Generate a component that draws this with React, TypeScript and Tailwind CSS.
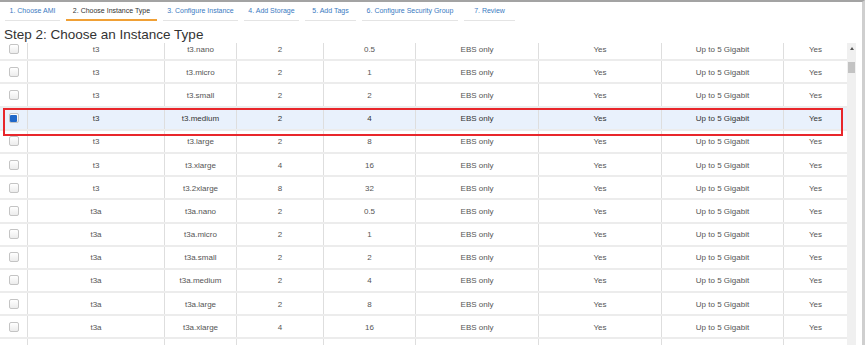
const tabs = [
  { label: '1. Choose AMI', w: 'w-[55px]' },
  { label: '2. Choose Instance Type', w: 'w-[91px]' },
  { label: '3. Configure Instance', w: 'w-[75px]' },
  { label: '4. Add Storage', w: 'w-[55px]' },
  { label: '5. Add Tags', w: 'w-[51px]' },
  { label: '6. Configure Security Group', w: 'w-[96px]' },
  { label: '7. Review', w: 'w-[51px]' },
];

const rows = [
  ['t3', 't3.nano', '2', '0.5'],
  ['t3', 't3.micro', '2', '1'],
  ['t3', 't3.small', '2', '2'],
  ['t3', 't3.medium', '2', '4'],
  ['t3', 't3.large', '2', '8'],
  ['t3', 't3.xlarge', '4', '16'],
  ['t3', 't3.2xlarge', '8', '32'],
  ['t3a', 't3a.nano', '2', '0.5'],
  ['t3a', 't3a.micro', '2', '1'],
  ['t3a', 't3a.small', '2', '2'],
  ['t3a', 't3a.medium', '2', '4'],
  ['t3a', 't3a.large', '2', '8'],
  ['t3a', 't3a.xlarge', '4', '16'],
];

const SELECTED = 3;
const grid = 'grid grid-cols-[27px_137px_72px_87px_92px_123px_123px_122px_64px]';
const cell = 'flex items-center justify-center border-l border-[#dedede] pt-[2px]';

function Checkbox({ checked }: { checked: boolean }) {
  return (
    <div className="w-[10px] h-[10px] rounded-[2px] border border-[#c4c4c4] bg-gradient-to-b from-white to-[#ececec] flex items-center justify-center">
      {checked && <div className="w-[7px] h-[7px] rounded-[1px] bg-[#1f67c9]" />}
    </div>
  );
}

export default function App() {
  return (
    <div
      className="w-[865px] h-[345px] overflow-hidden bg-white border-t-2 border-r-[3px] border-t-[#a3a3a3] border-r-[#cfcfcf] flex flex-col"
      style={{ fontFamily: '"Liberation Sans", Arial, sans-serif' }}
    >
      {/* wizard tabs */}
      <div className="flex gap-[6px] pl-[5px] h-[19px]">
        {tabs.map((t, i) => (
          <div
            key={t.label}
            className={
              t.w +
              (i === 1
                ? ' pt-[4px] text-center border-b-2 border-[#f0a035] text-[7px] leading-[10px] text-[#333]'
                : ' pt-[4px] text-center border-b border-[#e4e4e4] text-[7px] leading-[10px] text-[#3a7abf]')
            }
          >
            {t.label}
          </div>
        ))}
      </div>

      <h1 className="mt-[6px] pl-[4px] text-[13.5px] leading-[16px] text-[#333]">
        Step 2: Choose an Instance Type
      </h1>

      <div className="flex flex-1 min-h-0">
        {/* table, scrolled */}
        <div className="w-[847px] overflow-hidden relative">
          <div className="-mt-[5px]">
            {rows.map((r, i) => {
              const sel = i === SELECTED;
              return (
                <div
                  key={r[1]}
                  className={
                    (sel ? 'bg-[#e9f1fc] text-[#333] ' : 'text-[#555] ') +
                    grid +
                    ' h-[23.2px] border-b-2 border-[#ececec] text-[8px]'
                  }
                >
                  <div className="flex items-center justify-center">
                    <Checkbox checked={sel} />
                  </div>
                  <div className={cell}>{r[0]}</div>
                  <div className={cell}>{r[1]}</div>
                  <div className={cell}>{r[2]}</div>
                  <div className={cell}>{r[3]}</div>
                  <div className={cell}>EBS only</div>
                  <div className={cell}>Yes</div>
                  <div className={cell}>Up to 5 Gigabit</div>
                  <div className={cell}>Yes</div>
                </div>
              );
            })}
            {/* next row, just scrolled into view */}
            <div className={grid + ' h-[23.2px]'}>
              <div />
              <div className={cell} />
              <div className={cell} />
              <div className={cell} />
              <div className={cell} />
              <div className={cell} />
              <div className={cell} />
              <div className={cell} />
              <div className={cell} />
            </div>
          </div>
          {/* selection highlight */}
          <div className="absolute left-[3px] top-[64.5px] w-[840px] h-[28px] border-[2.5px] border-[#e8262b]" />
        </div>

        {/* scrollbar */}
        <div className="w-[9px] bg-[#f0f0f0] flex flex-col items-center">
          <div className="mt-[4px] w-0 h-0 border-l-[2.5px] border-r-[2.5px] border-b-[3px] border-l-transparent border-r-transparent border-b-[#555]" />
          <div className="mt-[12px] w-[7px] h-[11px] bg-[#c3c3c3]" />
        </div>
        <div className="flex-1 bg-white" />
      </div>
    </div>
  );
}
